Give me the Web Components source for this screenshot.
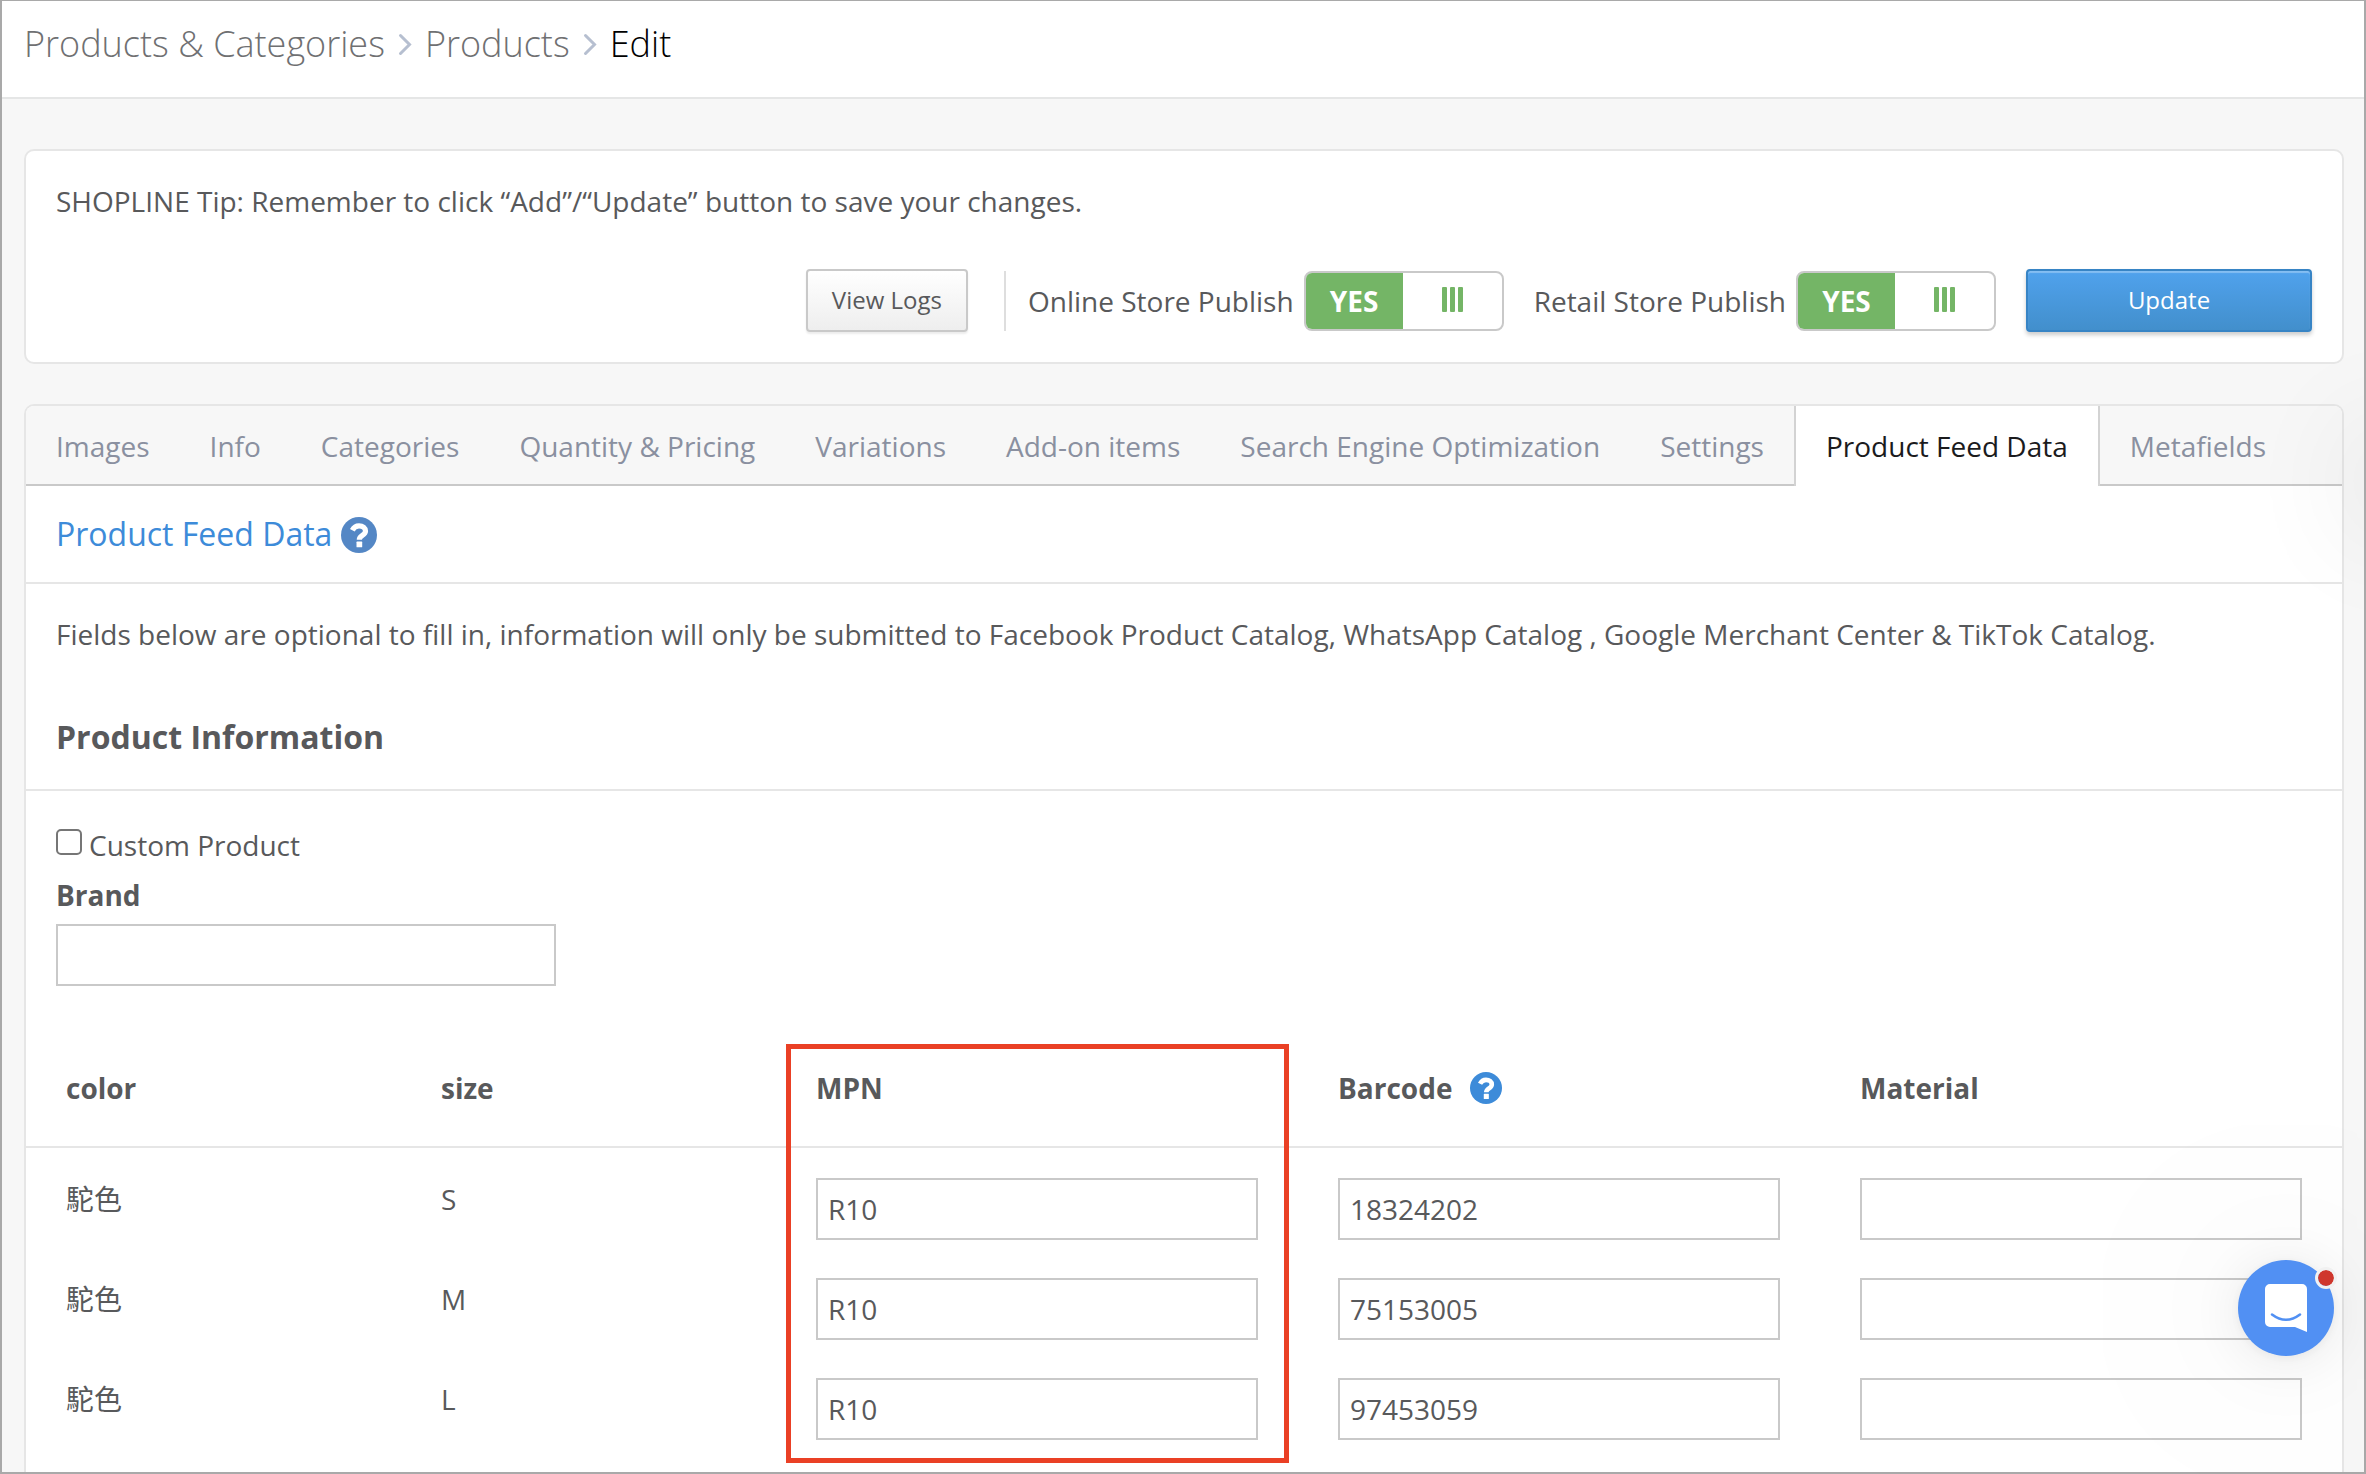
<!DOCTYPE html>
<html lang="en">
<head>
<meta charset="utf-8">
<title>Edit product</title>
<style>
html { height: 100%; }
body {
  margin: 0; min-height: 100%; box-sizing: border-box;
  font-family: "Open Sans", "Noto Sans CJK TC", sans-serif;
  font-size: 28px; line-height: 40px; color: #58595b; background: #f7f7f7;
}
</style>
</head>
<body>
<product-edit-page></product-edit-page>
<script>
const define = (name, html, setup) => {
  const template = document.createElement('template');
  template.innerHTML = html;
  customElements.define(name, class extends HTMLElement {
    constructor() {
      super();
      this.attachShadow({ mode: 'open' }).append(template.content.cloneNode(true));
    }
    connectedCallback() { if (setup) setup.call(this, this.shadowRoot); }
  });
};

define('bread-crumbs', `
<style>
:host { display: block; background: #fff; border-bottom: 2px solid #e5e6e6; }
nav { display: flex; align-items: center; height: 96px; padding: 0 22px 10px; box-sizing: border-box; font-size: 36px; line-height: 48px; font-weight: 300; }
a { color: #6f7072; text-decoration: none; }
span { color: #000; }
svg { width: 14px; height: 28px; margin: 0 13px; fill: none; stroke: #b6bfd0; stroke-width: 3; stroke-linecap: round; flex: none; }
</style>
<nav aria-label="Breadcrumb">
  <a href="#">Products &amp; Categories</a>
  <svg viewBox="0 0 14 28"><path d="M2.500 5.500l9 9-9 9"/></svg>
  <a href="#">Products</a>
  <svg viewBox="0 0 14 28"><path d="M2.500 5.500l9 9-9 9"/></svg>
  <span aria-current="page">Edit</span>
</nav>`);

define('content-card', `
<style>
:host { display: block; background: #fff; border: 2px solid #e6e6e6; border-radius: 10px; }
</style><slot></slot>`);

define('ui-button', `
<style>
:host { display: block; }
button { display: block; box-sizing: border-box; width: 100%; height: 63px; padding: 0 24px 2px; font: inherit; font-size: 24px; line-height: 36px; color: #58595b; border: 2px solid #c9c9c9; border-radius: 4px; background: linear-gradient(#fff, #eee); box-shadow: 0 2px 2px rgba(0,0,0,.08); }
:host([primary]) button { color: #fff; border-color: #3784c5; background: linear-gradient(#50a2ed, #428fcc); box-shadow: 0 3px 4px rgba(0,0,0,.2), inset 0 2px 1px rgba(255,255,255,.3); }
</style><button type="button"><slot></slot></button>`);

define('publish-switch', `
<style>
:host { display: block; }
label { display: flex; align-items: center; gap: 10px; white-space: nowrap; }
input { position: absolute; opacity: 0; width: 1px; height: 1px; margin: 0; }
.track { display: flex; box-sizing: border-box; width: 200px; height: 60px; border: 2px solid #c9c9c9; border-radius: 8px; overflow: hidden; background: #fff; }
.track > * { display: flex; align-items: center; justify-content: center; }
.on { width: 97px; background: #74b566; color: #fff; font-weight: 700; }
.grip { flex: 1; gap: 3px; padding-bottom: 2px; }
.grip i { width: 5px; height: 25px; border-radius: 1px; background: #74b566; }
</style>
<label><slot></slot><input type="checkbox" checked><span class="track"><span class="on">YES</span><span class="grip"><i></i><i></i><i></i></span></span></label>`);

define('help-icon', `
<style>
:host { display: inline-flex; width: 36px; height: 36px; color: #5487c5; }
:host([small]) { width: 32px; height: 32px; color: #3d8bd9; }
svg { width: 100%; height: 100%; }
</style>
<svg viewBox="0 0 36 36" role="img" aria-label="Help"><circle cx="18" cy="18" r="18" fill="currentColor"/><path d="M11.300 13.200C12.800 10.300 15 8.800 18 8.800c3.800 0 6.500 2.100 6.500 5.200 0 4.300-6.200 4.500-6.200 8.700" fill="none" stroke="#fff" stroke-width="5.200"/><rect x="15.500" y="24.600" width="5.700" height="5.700" rx=".6" fill="#fff"/></svg>`);

define('action-bar', `
<style>
:host { display: block; padding: 30px; }
p { margin: 0; padding-bottom: 48px; line-height: 40px; }
.row { display: flex; align-items: center; justify-content: flex-end; }
.line { width: 2px; height: 60px; background: #dedede; margin: 0 22px 0 36px; }
publish-switch + publish-switch { margin-left: 30px; }
ui-button[primary] { width: 286px; margin-left: 30px; }
</style>
<p>SHOPLINE Tip: Remember to click “Add”/“Update” button to save your changes.</p>
<div class="row">
  <ui-button>View Logs</ui-button><span class="line"></span>
  <publish-switch>Online Store Publish</publish-switch>
  <publish-switch>Retail Store Publish</publish-switch>
  <ui-button primary>Update</ui-button>
</div>`);

define('tab-bar', `
<style>
:host { display: block; }
nav { display: flex; background: #f7f7f7; border-radius: 8px 8px 0 0; }
a { box-sizing: border-box; height: 80px; padding: 20px 30px 18px; color: #8a90a0; text-decoration: none; white-space: nowrap; border-bottom: 2px solid #c9c9c9; }
a[aria-current] { color: #1b1b1d; background: #fff; border: 2px solid #d3d3d3; border-width: 0 2px; }
.rest { flex: 1; border-bottom: 2px solid #c9c9c9; }
</style>
<nav></nav>`, function (root) {
  const nav = root.querySelector('nav');
  if (nav.childElementCount) return;
  for (const name of this.getAttribute('tabs').split('|')) {
    const a = document.createElement('a');
    a.href = '#';
    a.textContent = name;
    if (name === this.getAttribute('current')) a.setAttribute('aria-current', 'page');
    nav.append(a);
  }
  const rest = document.createElement('span');
  rest.className = 'rest';
  nav.append(rest);
});

define('feed-form', `
<style>
:host { display: block; }
h2, h3 { margin: 0; font-size: 32px; line-height: 44px; padding: 0 30px; border-bottom: 2px solid #e6e6e6; }
h2 { display: flex; align-items: center; gap: 9px; font-weight: 400; color: #3d8bd9; padding-top: 26px; padding-bottom: 26px; }
h2 help-icon { margin-top: 2px; }
p { margin: 0; padding: 30px 30px 61px; }
h3 { font-weight: 700; padding-bottom: 30px; }
.fields { padding: 34px 30px 58px; }
.check { display: flex; align-items: center; gap: 7px; }
.check input { appearance: none; box-sizing: border-box; width: 26px; height: 26px; margin: 0 0 6px; border: 2px solid #767676; border-radius: 5px; background: #fff; }
.brand { display: block; font-weight: 700; padding: 10px 0 9px; }
.text { display: block; box-sizing: border-box; width: 500px; height: 62px; padding: 0 10px; border: 2px solid #c9c9c9; border-radius: 0; background: #fff; font: inherit; color: inherit; }
</style>
<h2>Product Feed Data <help-icon></help-icon></h2>
<p>Fields below are optional to fill in, information will only be submitted to Facebook Product Catalog, WhatsApp Catalog , Google Merchant Center &amp; TikTok Catalog.</p>
<h3>Product Information</h3>
<div class="fields">
  <div class="check"><input type="checkbox" id="custom"><label for="custom">Custom Product</label></div>
  <label class="brand" for="brand">Brand</label>
  <input class="text" id="brand" type="text">
</div>
<variant-table></variant-table>`);

define('variant-table', `
<style>
:host { display: block; }
table { width: 100%; table-layout: fixed; border-collapse: separate; border-spacing: 0; }
.narrow { width: 375px; }
th { position: relative; text-align: left; font-weight: 700; padding: 24px 40px 38px; border-bottom: 2px solid #e6e6e6; vertical-align: top; }
.help { display: flex; align-items: center; gap: 18px; }
td { padding: 30px 40px 8px; vertical-align: top; }
td.label { padding-top: 31px; padding-bottom: 0; }
input { display: block; box-sizing: border-box; width: 100%; height: 62px; padding: 0 10px; border: 2px solid #c9c9c9; border-radius: 0; background: transparent; font: inherit; color: inherit; }
.mark { position: absolute; left: 10px; right: 9px; top: 0; height: 419px; box-sizing: border-box; border: 5px solid #ea4025; pointer-events: none; }
</style>
<table>
  <colgroup><col class="narrow"><col class="narrow"><col><col><col></colgroup>
  <thead><tr><th>color</th><th>size</th><th>MPN<span class="mark"></span></th><th><span class="help">Barcode <help-icon small></help-icon></span></th><th>Material</th></tr></thead>
  <tbody></tbody>
</table>`, function (root) {
  const body = root.querySelector('tbody');
  if (body.childElementCount) return;
  const rows = [['駝色', 'S', 'R10', '18324202'], ['駝色', 'M', 'R10', '75153005'], ['駝色', 'L', 'R10', '97453059']];
  for (const [color, size, mpn, barcode] of rows) {
    const tr = body.insertRow();
    for (const text of [color, size]) {
      const cell = tr.insertCell();
      cell.className = 'label';
      cell.textContent = text;
    }
    for (const [label, value] of [['MPN', mpn], ['Barcode', barcode], ['Material', '']]) {
      const input = document.createElement('input');
      input.type = 'text';
      input.value = value;
      input.setAttribute('aria-label', `${label} ${color} ${size}`);
      tr.insertCell().append(input);
    }
  }
});

define('chat-launcher', `
<style>
:host { position: fixed; right: 32px; bottom: 118px; width: 96px; height: 96px; }
button { display: block; width: 96px; height: 96px; padding: 0; border: 0; border-radius: 50%; background: #5190f3; box-shadow: 0 2px 12px rgba(0,0,0,.06), 0 4px 64px rgba(0,0,0,.1), 0 0 240px 30px rgba(0,0,0,.06); }
svg { display: block; width: 96px; height: 96px; }
.dot { position: absolute; right: -3px; top: 7px; width: 16px; height: 16px; border: 3px solid #f1f1f1; border-radius: 50%; background: #cf372d; background-clip: padding-box; }
</style>
<button type="button" aria-label="Open chat"><svg viewBox="0 0 96 96"><path d="M32 24h32a5 5 0 0 1 5 5v43l-12-5H32a5 5 0 0 1-5-5V29a5 5 0 0 1 5-5z" fill="#fff"/><path d="M34 54.500Q48 65 62 54.500" fill="none" stroke="#5190f3" stroke-width="2.600" stroke-linecap="round"/></svg></button><span class="dot"></span>`);

/* Collapsed side panel: it rests past the right edge and only its shadow shows. */
define('side-panel', `
<style>
:host { position: absolute; left: 100%; top: 430px; width: 60px; height: 100px; border-radius: 10px; box-shadow: 0 0 120px rgba(0,0,0,.12); pointer-events: none; }
</style>`);

define('product-edit-page', `
<style>
:host { display: block; position: relative; box-sizing: border-box; height: 100vh; overflow: hidden; border: 2px solid #a9a9a9; border-top-width: 1px; }
main { display: flex; flex-direction: column; gap: 40px; padding: 50px 20px 0 22px; }
.tall { border-bottom: 0; border-radius: 10px 10px 0 0; min-height: 1066px; }
</style>
<bread-crumbs></bread-crumbs>
<main>
  <content-card><action-bar></action-bar></content-card>
  <content-card class="tall">
    <tab-bar tabs="Images|Info|Categories|Quantity &amp; Pricing|Variations|Add-on items|Search Engine Optimization|Settings|Product Feed Data|Metafields" current="Product Feed Data"></tab-bar>
    <feed-form></feed-form>
  </content-card>
</main>
<side-panel></side-panel>
<chat-launcher></chat-launcher>`);
</script>
</body>
</html>
